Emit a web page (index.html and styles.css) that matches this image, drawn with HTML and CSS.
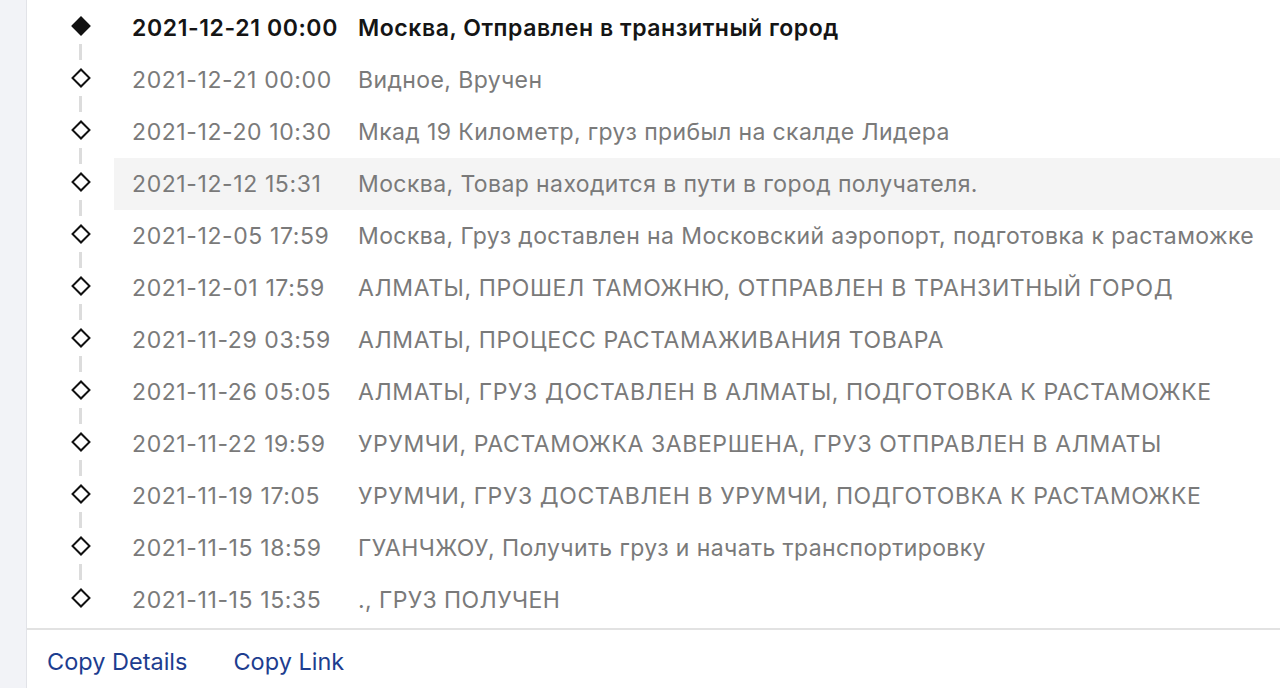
FILE: index.html
```html
<!DOCTYPE html>
<html lang="ru">
<head>
<meta charset="utf-8">
<title>Tracking</title>
<link rel="stylesheet" href="styles.css">
</head>
<body>
<div class="page">
  <aside class="side"></aside>
  <main class="main">
    <ul class="timeline">
      <li class="row current"><span class="mark"><i class="dia"></i></span><div class="info"><span class="date">2021-12-21 00:00</span><span class="desc">Москва, Отправлен в транзитный город</span></div></li>
      <li class="row"><span class="mark"><i class="dia"></i></span><div class="info"><span class="date">2021-12-21 00:00</span><span class="desc">Видное, Вручен</span></div></li>
      <li class="row"><span class="mark"><i class="dia"></i></span><div class="info"><span class="date">2021-12-20 10:30</span><span class="desc">Мкад 19 Километр, груз прибыл на скалде Лидера</span></div></li>
      <li class="row hover"><span class="mark"><i class="dia"></i></span><div class="info"><span class="date">2021-12-12 15:31</span><span class="desc">Москва, Товар находится в пути в город получателя.</span></div></li>
      <li class="row"><span class="mark"><i class="dia"></i></span><div class="info"><span class="date">2021-12-05 17:59</span><span class="desc">Москва, Груз доставлен на Московский аэропорт, подготовка к растаможке</span></div></li>
      <li class="row"><span class="mark"><i class="dia"></i></span><div class="info"><span class="date">2021-12-01 17:59</span><span class="desc caps">АЛМАТЫ, ПРОШЕЛ ТАМОЖНЮ, ОТПРАВЛЕН В ТРАНЗИТНЫЙ ГОРОД</span></div></li>
      <li class="row"><span class="mark"><i class="dia"></i></span><div class="info"><span class="date">2021-11-29 03:59</span><span class="desc caps">АЛМАТЫ, ПРОЦЕСС РАСТАМАЖИВАНИЯ ТОВАРА</span></div></li>
      <li class="row"><span class="mark"><i class="dia"></i></span><div class="info"><span class="date">2021-11-26 05:05</span><span class="desc caps">АЛМАТЫ, ГРУЗ ДОСТАВЛЕН В АЛМАТЫ, ПОДГОТОВКА К РАСТАМОЖКЕ</span></div></li>
      <li class="row"><span class="mark"><i class="dia"></i></span><div class="info"><span class="date">2021-11-22 19:59</span><span class="desc caps">УРУМЧИ, РАСТАМОЖКА ЗАВЕРШЕНА, ГРУЗ ОТПРАВЛЕН В АЛМАТЫ</span></div></li>
      <li class="row"><span class="mark"><i class="dia"></i></span><div class="info"><span class="date">2021-11-19 17:05</span><span class="desc caps">УРУМЧИ, ГРУЗ ДОСТАВЛЕН В УРУМЧИ, ПОДГОТОВКА К РАСТАМОЖКЕ</span></div></li>
      <li class="row"><span class="mark"><i class="dia"></i></span><div class="info"><span class="date">2021-11-15 18:59</span><span class="desc">ГУАНЧЖОУ, Получить груз и начать транспортировку</span></div></li>
      <li class="row"><span class="mark"><i class="dia"></i></span><div class="info"><span class="date">2021-11-15 15:35</span><span class="desc">., ГРУЗ ПОЛУЧЕН</span></div></li>
    </ul>
    <div class="actions">
      <a class="action" href="#">Copy Details</a>
      <a class="action" href="#">Copy Link</a>
    </div>
  </main>
</div>
</body>
</html>
```

FILE: styles.css
```css
* { box-sizing: border-box; }
html, body { margin: 0; padding: 0; background: #fff; }
body {
  font-family: Inter, "Noto Sans", sans-serif;
  font-size: 23px;
  color: #7a7a7a;
  overflow: hidden;
}
.page {
  display: flex;
  height: 688px;
}
.side {
  width: 27px;
  flex: none;
  background: #f2f3f7;
  border-right: 1px solid #e2e3e8;
}
.main {
  flex: 1;
  display: flex;
  flex-direction: column;
}
.timeline {
  list-style: none;
  margin: 2px 0 0 0;
  padding: 0;
  background: linear-gradient(#dcdcdc, #dcdcdc) no-repeat 52px 26px / 3px calc(100% - 52px);
  border-bottom: 2px solid #e2e2e2;
  padding-bottom: 2px;
}
.row {
  display: flex;
  height: 52px;
}
.mark {
  width: 87px;
  flex: none;
  display: flex;
  justify-content: flex-end;
  padding-right: 22px;
  align-items: flex-start;
}
.dia {
  display: flex;
  align-items: center;
  justify-content: center;
  width: 22px;
  height: 36px;
  margin-top: 6px;
  background: #fff;
}
.dia::after {
  content: "";
  width: 10px;
  height: 10px;
  border: 2px solid #111;
  background: #fff;
  transform: rotate(45deg);
}
.current .dia::after {
  width: 14px;
  height: 14px;
  background: #111;
  border: none;
}
.info {
  flex: 1;
  display: flex;
  align-items: center;
  padding-left: 18px;
  white-space: nowrap;
}
.hover .info { background: #f4f4f4; }
.date {
  width: 226px;
  flex: none;
  letter-spacing: 0.6px;
}
.desc {
  letter-spacing: 0.4px;
}
.desc.caps {
  letter-spacing: 0.6px;
}
.current { color: #151515; font-weight: 600; }
.current .date { letter-spacing: 0.6px; }
.current .desc { letter-spacing: 0.55px; }
.actions {
  display: flex;
  gap: 46px;
  padding: 17px 0 0 20px;
}
.action {
  color: #1d3d8f;
  text-decoration: none;
  font-size: 23.5px;
}
```
